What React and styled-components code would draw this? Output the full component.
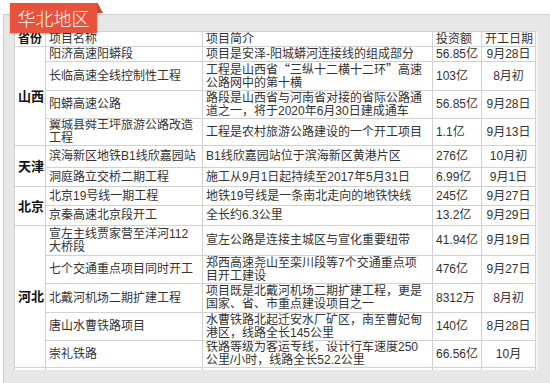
import React from 'react';
import styled, { createGlobalStyle } from 'styled-components';

const GlobalStyle = createGlobalStyle`
  html, body {
    margin: 0;
    padding: 0;
    background: #fff;
  }
  body {
    font-family: "Liberation Sans", "Noto Sans CJK SC", sans-serif;
  }
`;

const Page = styled.div`
  position: relative;
  width: 550px;
  height: 383px;
  overflow: hidden;
  box-sizing: border-box;
  padding: 14px 0 0 3px;
`;

const Panel = styled.div`
  height: 100%;
  box-sizing: border-box;
  background: #e7e7e7;
  border-top: 1px solid #d0d0d0;
  border-left: 1px solid #d0d0d0;
  padding: 16px 0 0 10px;
`;

const Tab = styled.div`
  position: absolute;
  left: 10px;
  top: 3px;
  width: 87px;
  height: 30px;
  background: #e8513c;
  color: #fff;
  font-family: "Noto Sans CJK SC", sans-serif;
  font-size: 18px;
  font-weight: 300;
  line-height: 30px;
  text-align: center;
  box-shadow: 0 1px 2px rgba(0, 0, 0, 0.25);

  &::after {
    content: '';
    position: absolute;
    right: -6px;
    top: -1px;
    width: 0;
    height: 0;
    border-bottom: 11px solid #d8412d;
    border-right: 6px solid transparent;
  }
`;

const TableWrap = styled.div`
  width: 524px;
  height: 339px;
  overflow: hidden;
  background: #f3f3f3;
`;

const Table = styled.table`
  width: 521px;
  table-layout: fixed;
  border-collapse: collapse;
  background: #fff;
  font-size: 12px;
  line-height: 13px;
  color: #333;
`;

const Row = styled.tr`
  height: ${(p) => p.$h}px;
`;

const Cell = styled.td`
  border: 1px solid #d2d2d2;
  padding: 0 3px;
  vertical-align: middle;
  white-space: nowrap;
  overflow: hidden;
  text-align: ${(p) => p.$align || 'left'};
  font-weight: ${(p) => (p.$bold ? 700 : 400)};
  color: ${(p) => (p.$bold ? '#111' : '#333')};
  font-size: ${(p) => (p.$big ? 13 : 12)}px;
`;

const HeadCell = styled(Cell).attrs({ as: 'th' })``;

// full-width CJK quote marks
const Punct = styled.span`
  font-family: "Noto Sans CJK SC", sans-serif;
  font-feature-settings: "fwid" 1;
`;

const cols = [31, 157, 230, 49, 54];

const groups = [
  {
    province: '山西',
    rows: [
      { h: 15, name: ['阳济高速阳蟒段'], intro: ['项目是安泽-阳城蟒河连接线的组成部分'], invest: '56.85亿', date: '9月28日' },
      { h: 27, name: ['长临高速全线控制性工程'], intro: ['工程是山西省“三纵十二横十二环”高速', '公路网中的第十横'], invest: '103亿', date: '8月初' },
      { h: 28, name: ['阳蟒高速公路'], intro: ['路段是山西省与河南省对接的省际公路通', '道之一，将于2020年6月30日建成通车'], invest: '56.85亿', date: '9月28日' },
      { h: 27, name: ['翼城县舜王坪旅游公路改造', '工程'], intro: ['工程是农村旅游公路建设的一个开工项目'], invest: '1.1亿', date: '9月13日' },
    ],
  },
  {
    province: '天津',
    rows: [
      { h: 22, name: ['滨海新区地铁B1线欣嘉园站'], intro: ['B1线欣嘉园站位于滨海新区黄港片区'], invest: '276亿', date: '10月初' },
      { h: 19, name: ['洞庭路立交桥二期工程'], intro: ['施工从9月1日起持续至2017年5月31日'], invest: '6.99亿', date: '9月1日' },
    ],
  },
  {
    province: '北京',
    rows: [
      { h: 19, name: ['北京19号线一期工程'], intro: ['地铁19号线是一条南北走向的地铁快线'], invest: '245亿', date: '9月27日' },
      { h: 20, name: ['京秦高速北京段开工'], intro: ['全长约6.3公里'], invest: '13.2亿', date: '9月29日' },
    ],
  },
  {
    province: '河北',
    rows: [
      { h: 30, name: ['宣左主线贾家营至洋河112', '大桥段'], intro: ['宣左公路是连接主城区与宣化重要纽带'], invest: '41.94亿', date: '9月19日' },
      { h: 28, name: ['七个交通重点项目同时开工'], intro: ['郑西高速尧山至栾川段等7个交通重点项', '目开工建设'], invest: '476亿', date: '9月27日' },
      { h: 29, name: ['北戴河机场二期扩建工程'], intro: ['项目既是北戴河机场二期扩建工程，更是', '国家、省、市重点建设项目之一'], invest: '8312万', date: '8月初' },
      { h: 28, name: ['唐山水曹铁路项目'], intro: ['水曹铁路北起迁安水厂矿区，南至曹妃甸', '港区，线路全长145公里'], invest: '140亿', date: '8月28日' },
      { h: 27, name: ['崇礼铁路'], intro: ['铁路等级为客运专线，设计行车速度250', '公里/小时，线路全长52.2公里'], invest: '66.56亿', date: '10月' },
    ],
  },
  {
    province: '',
    rows: [{ h: 20, name: [''], intro: [''], invest: '', date: '' }],
  },
];

const renderLine = (text) =>
  text.split(/([“”])/).map((part, i) =>
    part === '“' || part === '”' ? <Punct key={i}>{part}</Punct> : part
  );

const Lines = ({ lines }) =>
  lines.map((l, i) => (
    <React.Fragment key={i}>
      {i > 0 && <br />}
      {renderLine(l)}
    </React.Fragment>
  ));

const App = () => (
  <>
    <GlobalStyle />
    <Page>
      <Panel>
        <TableWrap>
          <Table>
            <colgroup>
              {cols.map((w, i) => (
                <col key={i} style={{ width: w }} />
              ))}
            </colgroup>
            <thead>
              <Row $h={15}>
                <HeadCell $align="center" $bold>省份</HeadCell>
                <HeadCell>项目名称</HeadCell>
                <HeadCell>项目简介</HeadCell>
                <HeadCell>投资额</HeadCell>
                <HeadCell $align="center">开工日期</HeadCell>
              </Row>
            </thead>
            <tbody>
              {groups.map((g, gi) =>
                g.rows.map((r, ri) => (
                  <Row key={`${gi}-${ri}`} $h={r.h}>
                    {ri === 0 && (
                      <Cell rowSpan={g.rows.length} $align="center" $bold $big>
                        {g.province}
                      </Cell>
                    )}
                    <Cell>
                      <Lines lines={r.name} />
                    </Cell>
                    <Cell>
                      <Lines lines={r.intro} />
                    </Cell>
                    <Cell>{r.invest}</Cell>
                    <Cell $align="center">{r.date}</Cell>
                  </Row>
                ))
              )}
            </tbody>
          </Table>
        </TableWrap>
      </Panel>
      <Tab>华北地区</Tab>
    </Page>
  </>
);

export default App;
